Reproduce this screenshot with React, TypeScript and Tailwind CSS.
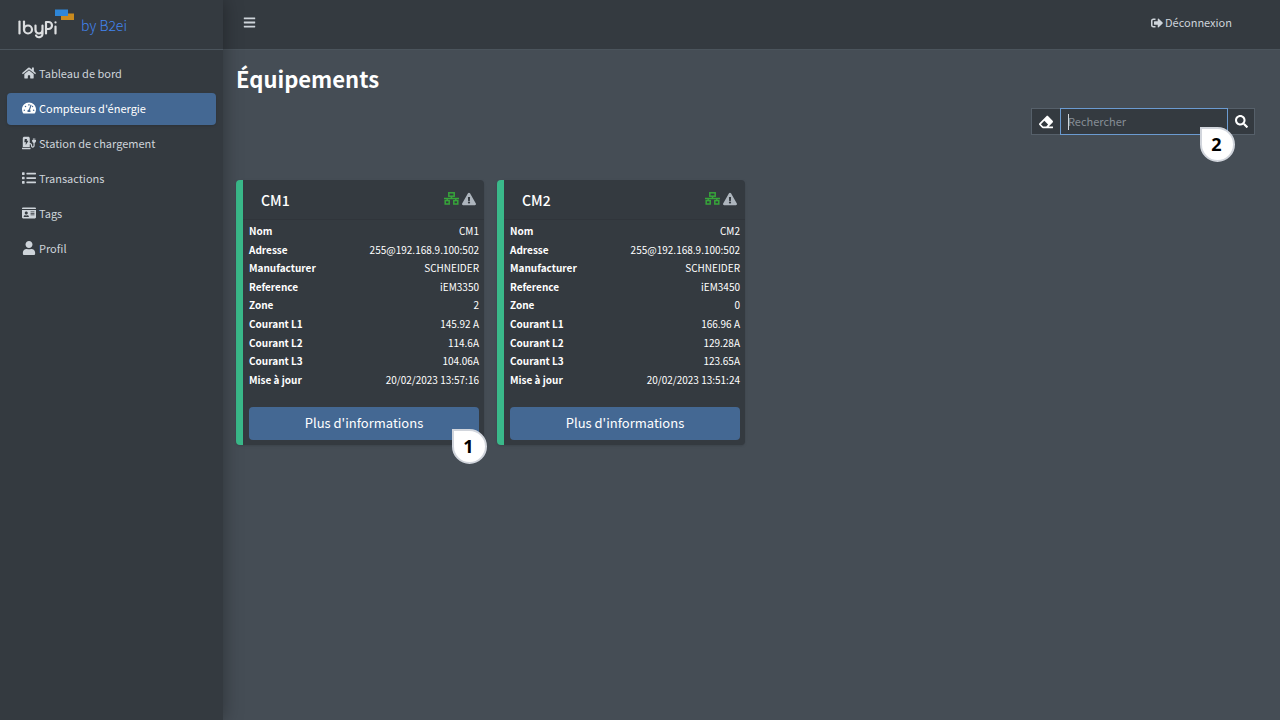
import type { ReactNode } from 'react';
import type { IconType } from 'react-icons';
import {
  FaBars,
  FaChargingStation,
  FaEraser,
  FaExclamationTriangle,
  FaHome,
  FaIdCard,
  FaList,
  FaSearch,
  FaSignOutAlt,
  FaTachometerAlt,
  FaUser,
} from 'react-icons/fa';

interface NavItem {
  label: string;
  icon: IconType;
  active?: boolean;
}

interface Meter {
  name: string;
  fields: [string, string][];
}

const navItems: NavItem[] = [
  { label: 'Tableau de bord', icon: FaHome },
  { label: "Compteurs d'énergie", icon: FaTachometerAlt, active: true },
  { label: 'Station de chargement', icon: FaChargingStation },
  { label: 'Transactions', icon: FaList },
  { label: 'Tags', icon: FaIdCard },
  { label: 'Profil', icon: FaUser },
];

const meters: Meter[] = [
  {
    name: 'CM1',
    fields: [
      ['Nom', 'CM1'],
      ['Adresse', '255@192.168.9.100:502'],
      ['Manufacturer', 'SCHNEIDER'],
      ['Reference', 'iEM3350'],
      ['Zone', '2'],
      ['Courant L1', '145.92 A'],
      ['Courant L2', '114.6A'],
      ['Courant L3', '104.06A'],
      ['Mise à jour', '20/02/2023 13:57:16'],
    ],
  },
  {
    name: 'CM2',
    fields: [
      ['Nom', 'CM2'],
      ['Adresse', '255@192.168.9.100:502'],
      ['Manufacturer', 'SCHNEIDER'],
      ['Reference', 'iEM3450'],
      ['Zone', '0'],
      ['Courant L1', '166.96 A'],
      ['Courant L2', '129.28A'],
      ['Courant L3', '123.65A'],
      ['Mise à jour', '20/02/2023 13:51:24'],
    ],
  },
];

function Logo() {
  return (
    <svg viewBox="0 0 58 32" className="h-8 w-[58px]" fill="none" aria-label="IbyPi" role="img">
      <rect x="43" y="4.500" width="13" height="6.500" fill="#c98a1e" />
      <rect x="37" y="0.500" width="13" height="6.500" fill="#2e86d8" />
      <g stroke="#dcdee0" strokeWidth="2.200" strokeLinecap="round" strokeLinejoin="round">
        <path d="M1.500 12.500v12" />
        <path d="M6 12.500v8" />
        <circle cx="10" cy="20.500" r="4" />
        <path d="M17.500 16.500v4.500a3.500 3.500 0 0 0 7 0M24.500 16.500v8.500a3.500 3.500 0 0 1-6.500 1.500" />
        <path d="M28 24.500V13h2.500a3.500 3.500 0 0 1 0 7h-2.500" />
        <path d="M37.500 17.500v7M37.500 13.300v.2" />
      </g>
    </svg>
  );
}

function NetworkIcon() {
  return (
    <svg viewBox="0 0 15 13" className="h-[13px] w-[15px]" fill="none" stroke="#37a53a" strokeWidth="1.500" aria-hidden="true">
      <rect x="4.800" y="0.800" width="5.400" height="3.400" />
      <path d="M7.500 4.200v2.300M0 6.500h15M3.200 6.500v2M11.800 6.500v2" />
      <rect x="1.200" y="8.600" width="4" height="3.400" />
      <rect x="9.800" y="8.600" width="4" height="3.400" />
    </svg>
  );
}

function Marker({ children, className }: { children: ReactNode; className: string }) {
  return (
    <span
      className={`absolute z-10 flex size-[35px] items-center justify-center rounded-full rounded-tl-none border-2 border-gray-300 bg-white pr-[2px] pb-[2px] font-['Noto_Sans',sans-serif] text-lg font-bold text-black ${className}`}
    >
      {children}
    </span>
  );
}

function Sidebar() {
  return (
    <aside className="relative z-10 w-[223px] shrink-0 bg-[#343a40] shadow-[0_0_18px_rgba(0,0,0,0.35)]">
      <a href="#" className="flex h-[50px] items-center gap-[5px] border-b border-[#4b545c] pl-[18px] text-[#4285f0]">
        <Logo />
        <span className="text-sm font-light">by B2ei</span>
      </a>
      <nav className="flex flex-col gap-[3px] px-[7px] pt-2">
        {navItems.map(({ label, icon: Icon, active }) => (
          <a
            key={label}
            href="#"
            className={`flex h-8 items-center gap-[3px] rounded pb-[2px] pl-[15px] text-[11px] ${
              active ? 'bg-[#446893] text-white shadow' : 'text-[#ced4da]'
            }`}
          >
            <Icon className="size-[14px]" />
            {label}
          </a>
        ))}
      </nav>
    </aside>
  );
}

function SearchBox() {
  return (
    <form className="relative flex h-[27px] w-[224px]">
      <button type="button" aria-label="Effacer" className="flex w-[29px] items-center justify-center border border-r-0 border-[#56606a] bg-[#343a40]">
        <FaEraser className="size-[14px]" />
      </button>
      <div className="relative flex min-w-0 flex-1">
        <input
          type="text"
          aria-label="Rechercher"
          placeholder="Rechercher"
          className="w-full border border-[#6b9bd1] bg-[#343a40] px-[7px] text-[11px] text-white outline-none placeholder:text-[#868e96]"
        />
        <span className="absolute top-[6px] left-2 h-4 w-px bg-gray-300" aria-hidden="true" />
      </div>
      <button type="button" aria-label="Lancer la recherche" className="flex w-[27px] items-center justify-center border border-l-0 border-[#56606a] bg-[#343a40]">
        <FaSearch className="size-[13px]" />
      </button>
      <Marker className="top-[19px] right-5">2</Marker>
    </form>
  );
}

function MeterCard({ meter, marker }: { meter: Meter; marker?: string }) {
  return (
    <section className="relative w-[248px] rounded border-l-[7px] border-[#3ab98a] bg-[#343a40] shadow">
      <header className="flex h-10 items-center justify-between border-b border-[#30353b] pr-2 pl-[18px]">
        <h2 className="text-sm font-medium">{meter.name}</h2>
        <span className="flex items-center gap-[3px] pb-[2px]">
          <NetworkIcon />
          <FaExclamationTriangle className="size-[14px] text-[#adb5bd]" />
        </span>
      </header>
      <div className="px-[5px] pt-[2px] pb-[5px] pl-[6px]">
        <table className="h-[167px] w-full text-[10px] leading-none">
          <tbody>
            {meter.fields.map(([label, value]) => (
              <tr key={label}>
                <th scope="row" className="text-left font-bold">{label}</th>
                <td className="text-right">{value}</td>
              </tr>
            ))}
          </tbody>
        </table>
        <button type="button" className="mt-[18px] h-[33px] w-full rounded bg-[#446893] pb-[2px] text-[13px]">
          Plus d'informations
        </button>
      </div>
      {marker && <Marker className="-right-[3px] -bottom-[19px]">{marker}</Marker>}
    </section>
  );
}

export default function App() {
  return (
    <div className="flex min-h-screen bg-[#454d55] font-['Noto_Sans_CJK_SC',sans-serif] text-white">
      <Sidebar />
      <div className="min-w-0 flex-1">
        <header className="flex h-[50px] items-center justify-between border-b border-[#4b545c] bg-[#343a40] pr-12 pb-1 pl-5 text-[11px] text-[#ced4da]">
          <button type="button" aria-label="Menu">
            <FaBars className="size-[13px]" />
          </button>
          <a href="#" className="flex items-center gap-[2px]">
            <FaSignOutAlt className="size-3" />
            Déconnexion
          </a>
        </header>
        <main className="pr-[25px] pl-[13px]">
          <h1 className="pt-3 text-[22px] leading-8 font-bold">Équipements</h1>
          <div className="mt-[14px] flex justify-end">
            <SearchBox />
          </div>
          <div className="mt-[45px] flex flex-wrap gap-[13px]">
            {meters.map((meter, i) => (
              <MeterCard key={meter.name} meter={meter} marker={i === 0 ? '1' : undefined} />
            ))}
          </div>
        </main>
      </div>
    </div>
  );
}
